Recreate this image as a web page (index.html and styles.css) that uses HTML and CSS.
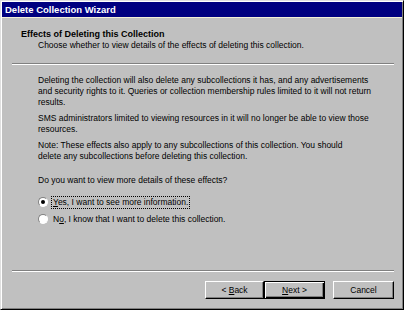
FILE: index.html
```html
<!DOCTYPE html>
<html>
<head>
<meta charset="utf-8">
<link rel="stylesheet" href="styles.css">
</head>
<body>
<div class="window">
  <div class="titlebar">Delete Collection Wizard</div>
  <div class="header">
    <div class="h-title">Effects of Deleting this Collection</div>
    <div class="h-sub">Choose whether to view details of the effects of deleting this collection.</div>
  </div>
  <div class="sep top-sep"></div>
  <div class="content">
    <p>Deleting the collection will also delete any subcollections it has, and any advertisements<br>and security rights to it. Queries or collection membership rules limited to it will not return<br>results.</p>
    <p>SMS administrators limited to viewing resources in it will no longer be able to view those<br>resources.</p>
    <p>Note: These effects also apply to any subcollections of this collection. You should<br>delete any subcollections before deleting this collection.</p>
    <p class="question">Do you want to view more details of these effects?</p>
    <div class="radio-row first">
      <span class="radio checked"></span>
      <span class="label focus"><u>Y</u>es, I want to see more information.</span>
    </div>
    <div class="radio-row">
      <span class="radio"></span>
      <span class="label">N<u>o</u>, I know that I want to delete this collection.</span>
    </div>
  </div>
  <div class="sep bottom-sep"></div>
  <div class="buttons">
    <button class="btn back">&lt; <u>B</u>ack</button>
    <button class="btn default"><u>N</u>ext &gt;</button>
    <button class="btn cancel">Cancel</button>
  </div>
</div>
</body>
</html>
```
FILE: styles.css
```css
html, body {
  margin: 0;
  padding: 0;
  background: #c0c0c0;
}
.window {
  width: 404px;
  height: 310px;
  box-sizing: border-box;
  background: #c0c0c0;
  border-style: solid;
  border-width: 1px;
  border-color: #dfdfdf #000 #000 #dfdfdf;
  box-shadow: inset 1px 1px 0 #fff, inset -1px -1px 0 #808080;
  padding: 1px;
  font-family: "Liberation Sans", Arial, sans-serif;
  font-size: 8.5px;
  color: #000;
  display: flex;
  flex-direction: column;
}
.titlebar {
  height: 15px;
  background: #000080;
  color: #fff;
  font-weight: bold;
  font-size: 9.5px;
  line-height: 15px;
  padding-left: 3px;
  border-bottom: 1px solid #f4f0d8;
}
.header {
  padding: 10px 0 0 19px;
}
.h-title {
  font-weight: bold;
  font-size: 9px;
  line-height: 12px;
}
.h-sub {
  padding-left: 17px;
  line-height: 11px;
}
.sep {
  height: 1px;
  background: #808080;
  border-bottom: 1px solid #fff;
  margin: 0 8px 0 10px;
}
.top-sep {
  margin-top: 12px;
}
.content {
  padding: 10px 10px 0 36px;
  flex: 1;
  white-space: nowrap;
}
.content p {
  margin: 0 0 5px 0;
  line-height: 11px;
}
.content p.question {
  margin-top: 13px;
}
.radio-row {
  display: flex;
  align-items: center;
  height: 12px;
  margin-top: 5px;
}
.radio-row.first {
  margin-top: 10px;
}
.radio {
  width: 10px;
  height: 10px;
  box-sizing: border-box;
  border-radius: 50%;
  background: #fff;
  border: 1px solid;
  border-color: #808080 #fff #fff #808080;
  margin-right: 4px;
  position: relative;
}
.radio.checked::after {
  content: "";
  position: absolute;
  left: 2px;
  top: 2px;
  width: 4px;
  height: 4px;
  border-radius: 50%;
  background: #000;
}
.label {
  padding: 0 1px;
  line-height: 11px;
}
.label.focus {
  outline: 1px dotted #000;
}
.bottom-sep {
  margin-bottom: 9px;
}
.buttons {
  display: flex;
  justify-content: flex-end;
  padding: 0 8px 9px 0;
}
.btn {
  width: 61px;
  height: 18px;
  padding: 0;
  margin: 0;
  font-family: "Liberation Sans", Arial, sans-serif;
  font-size: 8.5px;
  color: #000;
  background: #c0c0c0;
  border-style: solid;
  border-width: 1px;
  border-color: #fff #000 #000 #fff;
  box-shadow: inset -1px -1px 0 #808080;
}
.btn.back {
  width: 59px;
}
.btn.default {
  border-color: #000;
  box-shadow: inset 1px 1px 0 #fff, inset -1px -1px 0 #000, inset -2px -2px 0 #808080;
}
.btn.cancel {
  margin-left: 8px;
}
```
